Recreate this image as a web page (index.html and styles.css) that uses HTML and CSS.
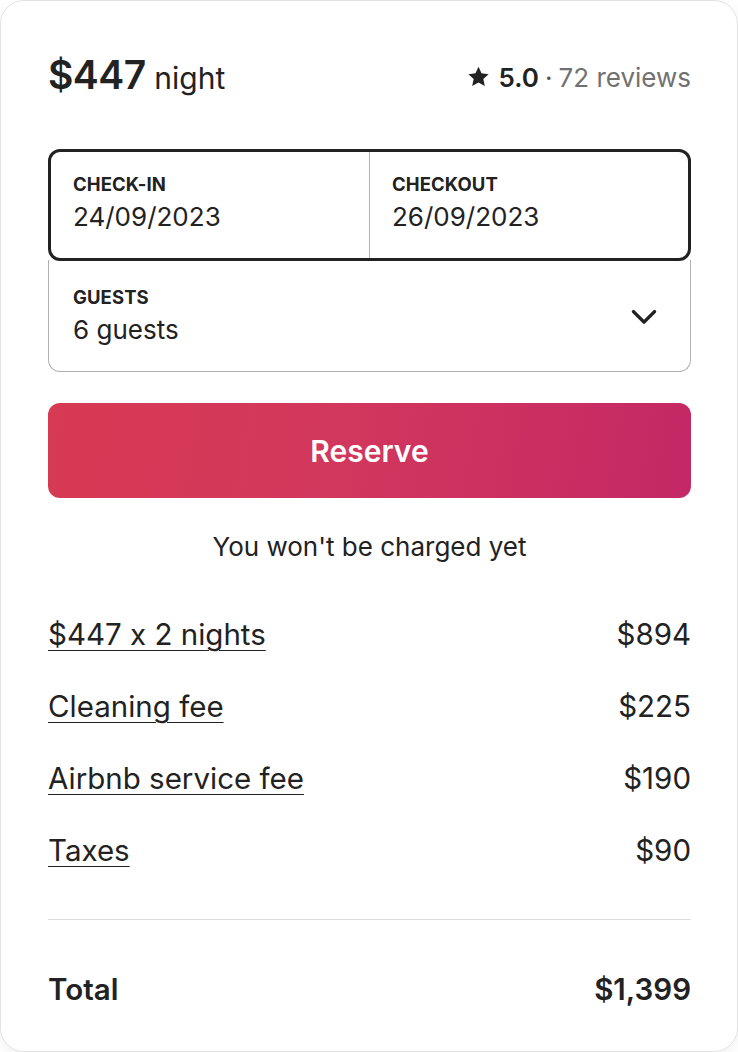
FILE: index.html
```html
<!DOCTYPE html>
<html lang="en">
<head>
<meta charset="utf-8">
<title>Reserve</title>
<link rel="stylesheet" href="styles.css">
</head>
<body>
<div class="card">
  <div class="header">
    <div class="price"><span class="amount">$447</span> <span class="unit">night</span></div>
    <div class="rating">
      <svg class="star" viewBox="0 0 32 32" width="23" height="23"><path d="M16 2.5l4.2 9.1 9.9 1.1-7.4 6.7 2.1 9.8L16 24.2l-8.8 5 2.1-9.8-7.4-6.7 9.9-1.1z" fill="#222"/></svg>
      <span class="score">5.0</span><span class="dot">·</span><span class="reviews">72 reviews</span>
    </div>
  </div>

  <div class="picker">
    <div class="dates">
      <div class="field">
        <div class="label">CHECK-IN</div>
        <div class="value">24/09/2023</div>
      </div>
      <div class="field field-right">
        <div class="label">CHECKOUT</div>
        <div class="value">26/09/2023</div>
      </div>
    </div>
    <div class="guests">
      <div class="field">
        <div class="label">GUESTS</div>
        <div class="value">6 guests</div>
      </div>
      <svg class="chevron" viewBox="0 0 32 32" width="28" height="28"><path d="M4 11l12 12 12-12" fill="none" stroke="#222" stroke-width="4" stroke-linecap="round" stroke-linejoin="round"/></svg>
    </div>
  </div>

  <button class="reserve">Reserve</button>
  <p class="note">You won't be charged yet</p>

  <div class="lines">
    <div class="line"><span class="link">$447 x 2 nights</span><span>$894</span></div>
    <div class="line"><span class="link">Cleaning fee</span><span>$225</span></div>
    <div class="line"><span class="link">Airbnb service fee</span><span>$190</span></div>
    <div class="line"><span class="link">Taxes</span><span>$90</span></div>
  </div>

  <div class="total"><span>Total</span><span>$1,399</span></div>
</div>
</body>
</html>
```

FILE: styles.css
```css
html, body {
  margin: 0;
  padding: 0;
  background: #fff;
}
body {
  font-family: "Inter", "Roboto", "Liberation Sans", sans-serif;
  font-feature-settings: "calt" 0;
  color: #222;
}
.card {
  box-sizing: border-box;
  width: 738px;
  height: 1052px;
  border: 1px solid #e2e2e2;
  border-radius: 24px;
  box-shadow: 0 4px 14px rgba(0,0,0,0.06);
  padding: 50px 46px 0 47px;
}
.header {
  display: flex;
  justify-content: space-between;
  align-items: baseline;
  height: 58px;
}
.amount {
  font-size: 39px;
  font-weight: 600;
  letter-spacing: -0.5px;
  margin-right: 4px;
}
.unit {
  font-size: 30px;
  font-weight: 400;
}
.rating {
  display: flex;
  align-items: center;
  font-size: 26px;
}
.star { margin-right: 9px; position: relative; top: -1px; }
.score { font-weight: 600; }
.dot { color: #555; margin: 0 6px; }
.reviews { color: #717171; }

.picker {
  margin-top: 40px;
}
.dates {
  display: flex;
  height: 112px;
  box-sizing: border-box;
  border: 3px solid #222;
  border-radius: 12px;
}
.dates .field {
  flex: 1;
  padding: 21px 0 0 22px;
}
.dates .field-right {
  border-left: 1px solid #b0b0b0;
}
.label {
  font-size: 18.5px;
  font-weight: 700;
  letter-spacing: 0.1px;
}
.value {
  font-size: 26px;
  margin-top: 6px;
}
.guests {
  display: flex;
  align-items: center;
  justify-content: space-between;
  height: 112px;
  box-sizing: border-box;
  margin-top: -1px;
  border: 1px solid #b0b0b0;
  border-top: none;
  border-radius: 0 0 12px 12px;
  padding: 0 32px 0 24px;
}
.guests .field { padding-top: 0; }
.reserve {
  display: block;
  width: 100%;
  height: 95px;
  margin-top: 31px;
  border: none;
  border-radius: 12px;
  background: linear-gradient(100deg, #d73a52 0%, #d2375d 45%, #c42865 100%);
  color: #fff;
  font-family: inherit;
  font-size: 30px;
  font-weight: 600;
}
.note {
  margin: 33px 0 0;
  text-align: center;
  font-size: 26px;
}
.lines {
  margin-top: 52px;
  padding-bottom: 49px;
  border-bottom: 1px solid #ddd;
}
.line {
  display: flex;
  justify-content: space-between;
  font-size: 29.5px;
  line-height: 40px;
  margin-bottom: 32px;
}
.line:last-child { margin-bottom: 0; }
.link {
  text-decoration: underline;
  text-underline-offset: 5px;
  text-decoration-thickness: 1px;
}
.total {
  display: flex;
  justify-content: space-between;
  font-size: 29.5px;
  font-weight: 600;
  margin-top: 51px;
}
```
